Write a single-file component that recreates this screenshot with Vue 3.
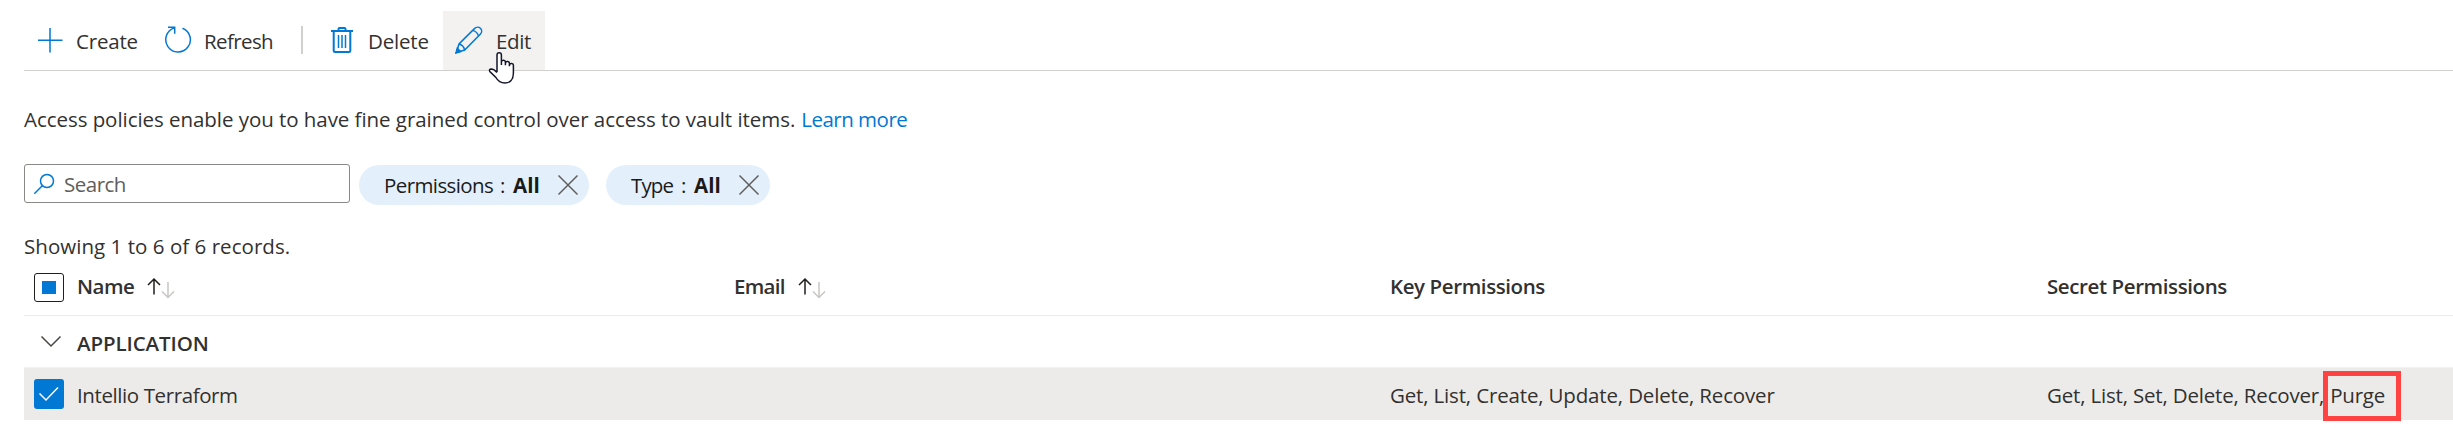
<template>
  <div class="access-policies">
    <!-- Command bar -->
    <div class="toolbar">
      <button class="command create">
        <svg width="26" height="26" viewBox="0 0 26 26">
          <path d="M13 1v24.500M1 13.200h24.500" />
        </svg>
        <span>Create</span>
      </button>
      <button class="command refresh">
        <svg width="28" height="28" viewBox="0 0 28 28">
          <path d="M18.500 2.200A12.300 12.300 0 1 1 10.500 1.900M4 1.200h6.700v6.600" />
        </svg>
        <span>Refresh</span>
      </button>
      <span class="divider"></span>
      <button class="command delete">
        <svg width="22" height="28" viewBox="0 0 22 28">
          <path class="heavy" d="M0 5h22M2.700 5v19.500q0 1.500 1.500 1.500h13.600q1.500 0 1.500-1.500V5M7.500 5V3q0-1 1-1h5q1 0 1 1v2" />
          <path d="M7.500 9v13M11 9v13M14.500 9v13" />
        </svg>
        <span>Delete</span>
      </button>
      <button class="command edit">
        <svg width="28" height="28" viewBox="0 0 28 28">
          <path d="M1.400 26.500L4 18 19.700 2.400a3.700 3.700 0 0 1 5.800 5.600L9.700 24zM4 18q4.500 1 5.700 6M17.700 4.400q4.500 1.300 5.800 5.600" />
          <path class="tip" d="M1 27l1.300-4.700 3.300 3.400z" />
        </svg>
        <span>Edit</span>
        <svg class="pointer" width="27" height="34" viewBox="0 0 27 34">
          <path d="M9 21V4a2.200 2.200 0 0 1 4.400 0v10-3a2 2 0 0 1 4 .300v3-2a2 2 0 0 1 4 .500v2.500-1a2 2 0 0 1 4 .500V22c0 6.500-3.500 10-8.500 10-4.500 0-7-2-9-5.500L1.800 20.500c-.800-1.700 0-2.500 1.400-2.600 2.200 0 3.800 1.100 5.800 3.600" />
        </svg>
      </button>
    </div>

    <p class="description">
      <span>Access policies enable you to have fine grained control over access to vault items.</span>
      <a class="learn-more">Learn more</a>
    </p>

    <!-- Filters -->
    <div class="filters">
      <div class="search">
        <svg width="22" height="22" viewBox="0 0 22 22">
          <circle cx="14" cy="8" r="6.500" />
          <path d="M9.300 12.700L1.300 20.700" />
        </svg>
        <span>Search</span>
      </div>
      <div v-for="filter in filters" :key="filter.name" class="pill" :class="filter.name.toLowerCase()">
        <span class="pill-name">{{ filter.name }}</span>
        <span class="colon">:</span>
        <b>{{ filter.value }}</b>
        <svg width="22" height="22" viewBox="0 0 22 22">
          <path d="M1.500 1.500l19 19M20.500 1.500l-19 19" />
        </svg>
      </div>
    </div>

    <p class="summary">Showing 1 to 6 of 6 records.</p>

    <!-- Policies -->
    <div class="row header">
      <span class="checkbox partial"><i></i></span>
      <div v-for="column in columns" :key="column.label" class="cell">
        <span class="label" :class="column.key">{{ column.label }}</span>
        <svg v-if="column.sortable" class="sort" width="28" height="22" viewBox="0 0 28 22">
          <path d="M7 17.500V2M1 8l6-6 6 6" />
          <path class="down" d="M21 5v15.500M15 14.500l6 6 6-6" />
        </svg>
      </div>
    </div>
    <div class="row group">
      <svg class="chevron" width="22" height="14" viewBox="0 0 22 14">
        <path d="M1.500 1.500l9.500 9.500 9.500-9.500" />
      </svg>
      <span class="group-name">APPLICATION</span>
    </div>
    <div v-for="policy in policies" :key="policy.name" class="row selected">
      <span class="checkbox checked">
        <svg width="30" height="30" viewBox="0 0 30 30">
          <path d="M5.500 14.500l6.500 6.500L24 8.500" />
        </svg>
      </span>
      <div class="cell"><span class="policy-name">{{ policy.name }}</span></div>
      <div class="cell"></div>
      <div class="cell"><span class="key-list">{{ policy.keys }}</span></div>
      <div class="cell">
        <span class="secret-list">{{ policy.secrets }}</span>
        <span class="highlight">{{ policy.flagged }}</span>
      </div>
    </div>
  </div>
</template>

<script setup>
const filters = [
  { name: 'Permissions', value: 'All' },
  { name: 'Type', value: 'All' }
]

const columns = [
  { key: 'name', label: 'Name', sortable: true },
  { key: 'email', label: 'Email', sortable: true },
  { key: 'keys', label: 'Key Permissions' },
  { key: 'secrets', label: 'Secret Permissions' }
]

const policies = [
  {
    name: 'Intellio Terraform',
    keys: 'Get, List, Create, Update, Delete, Recover',
    secrets: 'Get, List, Set, Delete, Recover,',
    flagged: 'Purge'
  }
]
</script>

<style>
body {
  background: #fff;
}
</style>

<style scoped>
.access-policies {
  height: 428px;
  padding: 11px 0 0 24px;
  box-sizing: border-box;
  overflow: hidden;
  font-family: "Open Sans", "Noto Sans", sans-serif;
  font-size: 20.5px;
  line-height: 28px;
  letter-spacing: -0.4px;
  color: #323130;
  white-space: nowrap;
}

svg {
  display: block;
  flex: none;
  fill: none;
  stroke: #0078d4;
  stroke-width: 1.5;
}

p {
  margin: 0;
}

.toolbar {
  display: flex;
  height: 60px;
  box-sizing: border-box;
  border-bottom: 1px solid #d2d0ce;
}

.command {
  display: flex;
  align-items: center;
  box-sizing: border-box;
  padding: 0 0 1px;
  border: 0;
  background: none;
  font: inherit;
  letter-spacing: inherit;
  color: inherit;
}

.command span {
  padding-top: 2px;
}

.create {
  width: 140px;
  padding-left: 13px;
  gap: 13px;
  letter-spacing: -0.2px;
}

.refresh {
  width: 137px;
  gap: 12px;
  letter-spacing: -0.6px;
}

.divider {
  width: 2px;
  height: 28px;
  margin-top: 15px;
  background: #d2d0ce;
}

.delete {
  width: 140px;
  padding-left: 28px;
  gap: 15px;
  letter-spacing: -0.2px;
}

.heavy {
  stroke-width: 2;
}

.edit {
  position: relative;
  width: 102px;
  padding-left: 12px;
  gap: 13px;
  background: #f3f2f1;
}

.tip {
  fill: #0078d4;
}

/* hand cursor lies over the button and the line under it */
.pointer {
  position: absolute;
  left: 45px;
  top: 40px;
  fill: #fff;
  stroke: #14142b;
}

.description {
  display: flex;
  gap: 6px;
  margin: 34px 0 31px;
  letter-spacing: -0.05px;
}

.learn-more {
  letter-spacing: -0.5px;
  color: #0078d4;
}

.filters {
  display: flex;
}

.search {
  display: flex;
  align-items: center;
  width: 326px;
  height: 39px;
  margin-right: 9px;
  padding-left: 8px;
  gap: 9px;
  box-sizing: border-box;
  border: 1px solid #8a8886;
  border-radius: 3px;
  letter-spacing: -0.5px;
  color: #605e5c;
}

.pill {
  display: flex;
  align-items: center;
  height: 40px;
  margin: 1px 17px 0 0;
  padding-left: 25px;
  box-sizing: border-box;
  border-radius: 20px;
  background: #e3f0fb;
  letter-spacing: -0.6px;
  color: #1b1a19;
}

.permissions {
  width: 230px;
}

.type {
  width: 164px;
}

.pill-name {
  width: 116px;
}

.type .pill-name {
  width: 50px;
  letter-spacing: -0.9px;
}

.colon {
  width: 13px;
}

.pill b {
  width: 44px;
  letter-spacing: 0;
}

.pill svg {
  stroke: #605e5c;
}

.summary {
  margin-top: 27px;
  letter-spacing: 0.04px;
}

.row {
  display: grid;
  grid-template-columns: 53px 657px 656px 657px 1fr;
  align-items: center;
  box-sizing: border-box;
}

.header {
  height: 56px;
  border-bottom: 1px solid #edebe9;
  font-weight: 600;
}

.label {
  padding-bottom: 3px;
}

.name {
  letter-spacing: -0.5px;
}

.email {
  letter-spacing: -0.7px;
}

.cell {
  display: flex;
  align-items: center;
}

.checkbox {
  display: grid;
  place-items: center;
  width: 30px;
  height: 30px;
  margin-left: 10px;
  box-sizing: border-box;
  border-radius: 3px;
}

.partial {
  height: 29px;
  margin-top: -1px;
  border: 1px solid #201f1e;
  background: #fff;
}

.partial i {
  width: 14px;
  height: 13px;
  background: #0078d4;
}

.checked {
  background: #0078d4;
}

.checked svg {
  stroke: #fff;
}

.sort {
  margin-left: 13px;
  stroke: #201f1e;
}

.sort .down {
  stroke: #c8c6c4;
}

.group {
  height: 51px;
  font-weight: 600;
}

.group-name {
  padding-top: 3px;
  letter-spacing: -0.1px;
}

.chevron {
  margin-left: 16px;
  stroke: #484644;
}

.selected {
  height: 53px;
  border-top: 1px solid #f3f2f1;
  background: #edebe9;
}

.selected .cell {
  padding-top: 1px;
}

.key-list {
  letter-spacing: -0.16px;
}

.secret-list {
  letter-spacing: -0.18px;
}

/* frame drawn around the flagged permission */
.highlight {
  position: relative;
  margin-left: 6px;
  letter-spacing: -0.2px;
}

.highlight::after {
  content: "";
  position: absolute;
  left: -7px;
  top: -10px;
  width: 68px;
  height: 40px;
  border: 5px solid #ff4343;
}
</style>
